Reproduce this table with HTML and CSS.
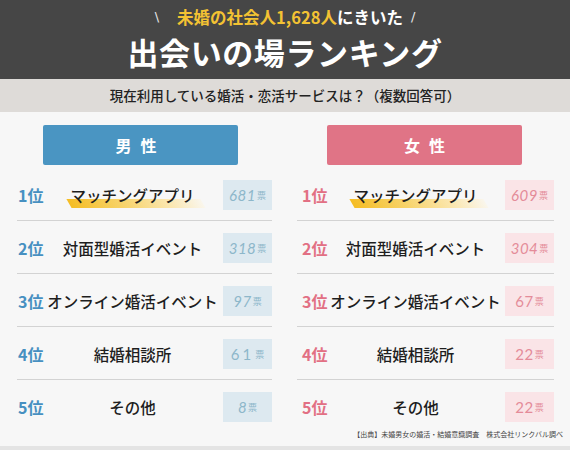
FILE: index.html
```html
<!DOCTYPE html>
<html lang="ja">
<head>
<meta charset="utf-8">
<title>出会いの場ランキング</title>
<link rel="stylesheet" href="styles.css">
</head>
<body>
<div class="page">
  <header class="hero">
    <p class="lead"><span class="mark mark--open">\</span><em>未婚の社会人1,628人</em>にきいた<span class="mark mark--close">/</span></p>
    <h1 class="title">出会いの場ランキング</h1>
  </header>
  <div class="question">現在利用している婚活・恋活サービスは？（複数回答可）</div>

  <main class="board">
    <section class="panel panel--male">
      <h2 class="panel-head">男性</h2>
      <ol class="rows">
        <li class="row"><span class="rank">1位</span><span class="name"><span class="hl">マッチングアプリ</span></span><span class="count"><b>681</b>票</span></li>
        <li class="row"><span class="rank">2位</span><span class="name">対面型婚活イベント</span><span class="count"><b>318</b>票</span></li>
        <li class="row"><span class="rank">3位</span><span class="name">オンライン婚活イベント</span><span class="count"><b>97</b>票</span></li>
        <li class="row"><span class="rank">4位</span><span class="name">結婚相談所</span><span class="count count--plain"><b class="wide">61</b>票</span></li>
        <li class="row"><span class="rank">5位</span><span class="name">その他</span><span class="count"><b>8</b>票</span></li>
      </ol>
    </section>
    <section class="panel panel--female">
      <h2 class="panel-head">女性</h2>
      <ol class="rows">
        <li class="row"><span class="rank">1位</span><span class="name"><span class="hl">マッチングアプリ</span></span><span class="count"><b>609</b>票</span></li>
        <li class="row"><span class="rank">2位</span><span class="name">対面型婚活イベント</span><span class="count"><b>304</b>票</span></li>
        <li class="row"><span class="rank">3位</span><span class="name">オンライン婚活イベント</span><span class="count count--plain"><b>67</b>票</span></li>
        <li class="row"><span class="rank">4位</span><span class="name">結婚相談所</span><span class="count count--plain"><b>22</b>票</span></li>
        <li class="row"><span class="rank">5位</span><span class="name">その他</span><span class="count count--plain"><b>22</b>票</span></li>
      </ol>
    </section>
  </main>

  <p class="source">【出典】未婚男女の婚活・結婚意識調査　株式会社リンクバル調べ</p>
</div>
</body>
</html>
```

FILE: styles.css
```css
* { box-sizing: border-box; }

html, body {
  margin: 0;
  padding: 0;
}

body {
  width: 570px;
  height: 450px;
  overflow: hidden;
  background: #f7f7f7;
  font-family: "Noto Sans CJK JP", "Noto Sans", sans-serif;
  color: #1e1e1e;
}

.page {
  height: 450px;
  display: flex;
  flex-direction: column;
  border-bottom: 4px solid #e4e4e4;
}

/* ---------- header ---------- */
.hero {
  background: #464646;
  height: 79px;
  display: flex;
  flex-direction: column;
  align-items: center;
}

.lead {
  margin: 0;
  padding-top: 6px;
  font-size: 16.5px;
  line-height: 22px;
  font-weight: 700;
  color: #ffffff;
  display: flex;
  align-items: center;
}

.lead em {
  font-style: normal;
  color: #f3c233;
}

.mark {
  font-family: "DejaVu Sans", sans-serif;
  font-weight: 400;
  font-size: 13px;
  color: #e8e8e8;
}

.mark--open { margin-right: 18px; }
.mark--close { margin-left: 8px; }

.title {
  margin: 4px 0 0;
  font-size: 31px;
  line-height: 40px;
  font-weight: 700;
  color: #ffffff;
  letter-spacing: 0.6px;
}

.question {
  background: #dedbd8;
  height: 33px;
  line-height: 33px;
  text-align: center;
  font-size: 13.5px;
  font-weight: 500;
  color: #222222;
}

/* ---------- board ---------- */
.board {
  display: grid;
  grid-template-columns: 255px 257px;
  column-gap: 25px;
  padding: 13px 16px 0 17px;
}

.panel-head {
  margin: 0 0 0 26px;
  width: 195px;
  height: 40px;
  display: flex;
  align-items: center;
  justify-content: center;
  font-size: 16px;
  font-weight: 700;
  letter-spacing: 9px;
  color: #ffffff;
  background: #4a95c2;
  border-radius: 2px;
}

.panel--female .panel-head {
  margin-left: 30px;
  background: #e07486;
  padding-left: 9px;
}

.rows {
  list-style: none;
  margin: 4px 0 0;
  padding: 0;
}

.row {
  display: grid;
  grid-template-columns: 25px 1fr 49px;
  align-items: center;
  padding: 12px 0 10px;
  border-bottom: 1px solid #d3d3d3;
}

.row:first-child {
  padding-top: 11px;
}

.row:last-child {
  border-bottom: 0;
  padding-bottom: 0;
}

.panel--female .row {
  grid-template-columns: 29px 1fr 49px;
}

.rank {
  font-size: 16px;
  font-weight: 700;
  line-height: 20px;
  color: #4790c1;
  padding-left: 1px;
  white-space: nowrap;
}

.panel--female .rank {
  color: #e27084;
  padding-left: 5px;
}

.name {
  text-align: center;
  font-size: 15.5px;
  font-weight: 500;
  line-height: 22px;
  color: #1e1e1e;
  white-space: nowrap;
}

.hl {
  position: relative;
  z-index: 0;
  display: inline-block;
}

.hl::before {
  content: "";
  position: absolute;
  z-index: -1;
  left: -1px;
  right: -9px;
  bottom: -2px;
  height: 9px;
  transform: skewX(30deg);
  background: linear-gradient(to right, #f5bd25 0%, #f7d36a 40%, #fbe7b0 75%, rgba(253, 244, 220, 0.4) 100%);
}

.count {
  height: 30px;
  display: flex;
  align-items: center;
  justify-content: center;
  background: #dde9f0;
  color: #8db7ca;
  font-size: 9px;
}

.count b {
  font-family: "Lato", sans-serif;
  font-style: italic;
  font-weight: 400;
  font-size: 15px;
  letter-spacing: 0.5px;
  margin-right: 1px;
}

.count--plain b {
  font-style: normal;
}

.count b.wide {
  letter-spacing: 3px;
}

.panel--female .count {
  background: #fae4e7;
  color: #e48c99;
}

/* ---------- source ---------- */
.source {
  margin: 7px 0 0;
  padding-right: 7px;
  text-align: right;
  font-size: 7px;
  line-height: 10px;
  color: #444444;
}
```
